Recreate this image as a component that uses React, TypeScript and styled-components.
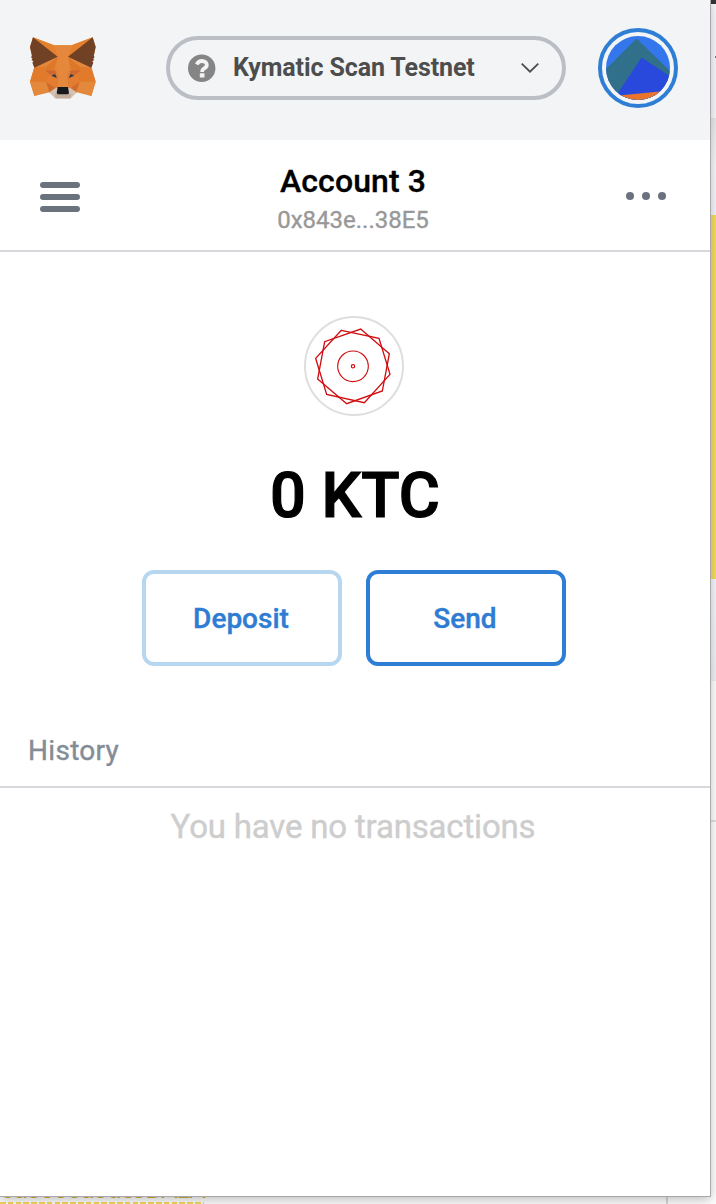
import React from "react";
import styled, { createGlobalStyle } from "styled-components";

const GlobalStyle = createGlobalStyle`
  * { box-sizing: border-box; }
  html, body { margin: 0; padding: 0; }
  body { width: 716px; height: 1204px; overflow: hidden; font-family: Roboto, sans-serif; background: #f5f5f6; }
  button { font-family: inherit; background: none; padding: 0; margin: 0; }
`;

const Screen = styled.div`
  display: grid;
  grid-template-columns: 710px 6px;
  grid-template-rows: 1196px 8px;
  width: 716px;
  height: 1204px;
  overflow: hidden;
`;

const Popup = styled.main`
  display: flex;
  flex-direction: column;
  background: #fff;
  position: relative;
  z-index: 1;
  box-shadow: 0 0 0 1px #a9a9ab, 0 3px 10px rgba(0, 0, 0, 0.26);
`;

const PageEdge = styled.aside`
  grid-row: 1 / 3;
  grid-column: 2;
  display: flex;
  flex-direction: column;
`;

const EdgeBand = styled.div<{ $h: number; $bg: string }>`
  height: ${(p) => p.$h}px;
  flex: none;
  background: ${(p) => p.$bg};
`;

const PageFoot = styled.footer`
  display: flex;
  overflow: hidden;
  background: #fafafb;
`;

const HashLink = styled.span`
  width: 208px;
  height: 6px;
  display: flex;
  align-items: flex-end;
  flex: none;
  font: 400 24px/24px "DejaVu Sans", sans-serif;
  letter-spacing: -1.8px;
  white-space: nowrap;
  color: #d0ae2d;
`;

const HashColumn = styled.div`
  width: 666px;
  display: flex;
  flex-direction: column;
  border-right: 2px solid #d5d5da;
  box-sizing: content-box;
`;

const Dashes = styled.i`
  width: 204px;
  height: 2px;
  background: repeating-linear-gradient(90deg, #efd45a 0 5.6px, transparent 5.6px 7.8px);
`;

const TopBar = styled.header`
  height: 140px;
  flex: none;
  display: flex;
  align-items: flex-start;
  padding: 28px 32px 0 20px;
  background: #f2f4f6;
`;

const NetworkPill = styled.button`
  width: 400px;
  height: 64px;
  margin: 8px 32px 0 60px;
  padding: 0 22px 0 18px;
  display: flex;
  align-items: center;
  border: 4px solid #bbbec5;
  border-radius: 32px;
`;

const NetworkName = styled.span`
  flex: 1;
  margin-left: 17px;
  text-align: left;
  font-size: 25px;
  line-height: 30px;
  font-weight: 700;
  letter-spacing: -0.11px;
  color: #4d4d4d;
  white-space: nowrap;
`;

const AccountRing = styled.button`
  width: 80px;
  height: 80px;
  border: 4px solid #2f7ed6;
  border-radius: 50%;
  display: flex;
  align-items: center;
  justify-content: center;
`;

const AccountBar = styled.section`
  height: 112px;
  flex: none;
  display: flex;
  align-items: center;
  justify-content: space-between;
  padding: 1px 44px 0 40px;
  border-bottom: 2px solid #d8d8dd;
`;

const MenuButton = styled.button`
  border: 0;
  width: 40px;
  display: flex;
  flex-direction: column;
  gap: 6px;
  margin-top: 2px;
`;

const MenuLine = styled.i`
  height: 6px;
  border-radius: 3px;
  background: #6a737d;
`;

const AccountText = styled.div`
  text-align: center;
  padding-top: 7px;
`;

const AccountName = styled.h1`
  margin: 0;
  font-size: 32px;
  line-height: 40px;
  font-weight: 500;
  letter-spacing: 0.1px;
  -webkit-text-stroke: 0.3px;
  color: #000;
`;

const Address = styled.div`
  font-size: 24px;
  line-height: 34px;
  margin-top: 2px;
  color: #989898;
  -webkit-text-stroke: 0.35px;
`;

const MoreButton = styled.button`
  border: 0;
  display: flex;
  gap: 8px;
`;

const Dot = styled.i`
  width: 8px;
  height: 8px;
  border-radius: 50%;
  background: #6a737d;
`;

const Overview = styled.section`
  height: 476px;
  flex: none;
  display: flex;
  flex-direction: column;
  align-items: center;
  padding: 64px 2px 0 0;
`;

const TokenCircle = styled.div`
  width: 100px;
  height: 100px;
  border: 2px solid #dedede;
  border-radius: 50%;
`;

const Balance = styled.div`
  margin-top: 42px;
  font-size: 63px;
  line-height: 76px;
  font-weight: 500;
  -webkit-text-stroke: 1.2px;
  color: #000;
  height: 76px;
  padding-left: 2px;
  white-space: nowrap;
`;

const Actions = styled.div`
  display: flex;
  gap: 24px;
  margin-top: 36px;
`;

const ActionButton = styled.button<{ $strong?: boolean }>`
  width: 200px;
  height: 96px;
  border: 4px solid ${(p) => (p.$strong ? "#2f7ed6" : "#b7d7f0")};
  border-radius: 12px;
  font-size: 28px;
  font-weight: 500;
  color: #2f7cd3;
  -webkit-text-stroke: 0.4px;
  padding-right: 2px;
`;

const HistoryTitle = styled.h2`
  margin: 0;
  height: 60px;
  flex: none;
  padding: 5px 0 0 28px;
  border-bottom: 2px solid #d8d8dd;
  font-size: 28px;
  line-height: 36px;
  font-weight: 400;
  letter-spacing: 0.3px;
  -webkit-text-stroke: 0.4px;
  color: #848c96;
`;

const EmptyNote = styled.p`
  margin: 20px 4px 0 0;
  text-align: center;
  font-size: 33px;
  line-height: 38px;
  letter-spacing: -0.18px;
  -webkit-text-stroke: 0.4px;
  color: #cdcdcd;
`;

const Fox = () => (
  <svg width="86" height="80" viewBox="0 0 258 240">
    <path d="M39 28 102 52H155L218 28 227 57 221 87 214 119 227 161 214 204 170 193 151 211H106L89 193 43 204 30 161 43 119 36 87 30 57Z" fill="#e2883c" />
    <path d="M39 28 102 52 113 86 84 68ZM218 28 155 52 144 86 173 68Z" fill="#e5802f" />
    <path d="M43 118H76L87 138 113 190 78 161H30ZM214 118H181L170 138 144 190 179 161H227Z" fill="#e17a2b" />
    <path d="M76 118 113 86 103 128 87 138ZM181 118 144 86 154 128 170 138Z" fill="#df7729" />
    <path d="M30 161H78L90 183 43 204ZM227 161H179L167 183 214 204Z" fill="#e4883b" />
    <path d="M78 161 108 181 89 195ZM179 161 149 181 168 195Z" fill="#cf6c2b" />
    <path d="M76 127 108 128 116 138 112 154 87 138ZM181 127 149 128 141 138 145 154 170 138Z" fill="#cd6830" />
    <path d="M87 138 112 154 108 181 78 161ZM170 138 145 154 149 181 179 161Z" fill="#e47d30" />
    <path d="M113 86 102 52H155L144 86 150 178H107Z" fill="#e5883b" />
    <path d="M107 128 116 142 112 178H108ZM150 128 141 142 145 178H149Z" fill="#de7d34" />
    <path d="M39 28 113 86 43 119 37 104 41 100 34 96 38 92 33 88 36 83 30 57ZM218 28 144 86 214 119 220 104 216 100 223 96 219 92 224 88 221 83 227 57Z" fill="#714126" />
    <path d="M94 143 105 138 111 150ZM163 143 152 138 146 150Z" fill="#283b4c" />
    <path d="M88 193 108 179H150L170 193 151 211H107Z" fill="#d4c2b3" />
    <path d="M104 197H154L151 211H107Z" fill="#c0ad9e" />
    <path d="M113 177H144L147 195 144 199H113L110 195Z" fill="#17191b" />
  </svg>
);

const QuestionIcon = () => (
  <svg width="28" height="28" viewBox="0 0 28 28">
    <circle cx="13.7" cy="14.3" r="13.7" fill="#858585" />
    <path d="M8.8 10.5C10 7.9 11.5 7 13.8 7c2.8 0 5 1.6 5 4 0 3.5-4.6 3.3-4.6 6v1" fill="none" stroke="#f2f4f6" strokeWidth="3.8" />
    <rect x="11.8" y="19.2" width="4.7" height="4.4" rx="0.5" fill="#f2f4f6" />
  </svg>
);

const Chevron = () => (
  <svg width="20" height="12" viewBox="0 0 20 12">
    <path d="M1.7 1.7 10 9.7 18.3 1.7" fill="none" stroke="#4d4d4d" strokeWidth="1.8" />
  </svg>
);

const Avatar = () => (
  <svg width="64" height="64" viewBox="0 0 64 64">
    <defs>
      <clipPath id="avatar">
        <circle cx="32" cy="32" r="32" />
      </clipPath>
    </defs>
    <g clipPath="url(#avatar)">
      <path d="M0 0H64V64H0Z" fill="#3477ed" />
      <path d="M-2 35 30.5 2.5 64 35V64H-2Z" fill="#30708b" />
      <path d="M35.5 21.5 68 43V64H8L12 57Z" fill="#2849dc" />
      <path d="M5 60.2 64 54.5V64H5Z" fill="#e9752c" />
    </g>
  </svg>
);

const TokenDrawing = () => (
  <svg width="96" height="96" viewBox="30 30 288 288">
    <g fill="none" stroke="#d00c0f" strokeWidth="4">
      <path d="M136 67 249 91 282 199 205 284 92 259 59 151Z" />
      <path d="M194 63 280 137 259 249 152 287 65 213 86 101Z" />
      <circle cx="171" cy="175" r="46" strokeWidth="3.4" />
      <circle cx="171" cy="175" r="5" strokeWidth="3.4" />
    </g>
  </svg>
);

export default function App() {
  return (
    <>
      <GlobalStyle />
      <Screen>
        <Popup>
          <TopBar>
            <Fox />
            <NetworkPill>
              <QuestionIcon />
              <NetworkName>Kymatic Scan Testnet</NetworkName>
              <Chevron />
            </NetworkPill>
            <AccountRing>
              <Avatar />
            </AccountRing>
          </TopBar>
          <AccountBar>
            <MenuButton>
              <MenuLine />
              <MenuLine />
              <MenuLine />
            </MenuButton>
            <AccountText>
              <AccountName>Account 3</AccountName>
              <Address>0x843e...38E5</Address>
            </AccountText>
            <MoreButton>
              <Dot />
              <Dot />
              <Dot />
            </MoreButton>
          </AccountBar>
          <Overview>
            <TokenCircle>
              <TokenDrawing />
            </TokenCircle>
            <Balance>0 KTC</Balance>
            <Actions>
              <ActionButton>Deposit</ActionButton>
              <ActionButton $strong>Send</ActionButton>
            </Actions>
          </Overview>
          <HistoryTitle>History</HistoryTitle>
          <EmptyNote>You have no transactions</EmptyNote>
        </Popup>
        <PageEdge>
          <EdgeBand $h={4} $bg="#343437" />
          <EdgeBand $h={52} $bg="#f5f5fa" />
          <EdgeBand $h={2} $bg="linear-gradient(90deg, #f5f5fa 5px, #77777b 5px)" />
          <EdgeBand $h={60} $bg="#f5f5fa" />
          <EdgeBand $h={97} $bg="linear-gradient(#e6e6e7, #f6f6f9 50%, #f2f2fa)" />
          <EdgeBand $h={364} $bg="#f5db5a" />
          <EdgeBand $h={102} $bg="linear-gradient(#f4f4fb, #ededf5)" />
          <EdgeBand $h={139} $bg="#fcfcfc" />
          <EdgeBand $h={2} $bg="#dedee3" />
          <EdgeBand $h={382} $bg="#fcfcfc" />
        </PageEdge>
        <PageFoot>
          <HashColumn>
            <HashLink>0a8000a8dc8DA1A</HashLink>
            <Dashes />
          </HashColumn>
        </PageFoot>
      </Screen>
    </>
  );
}
